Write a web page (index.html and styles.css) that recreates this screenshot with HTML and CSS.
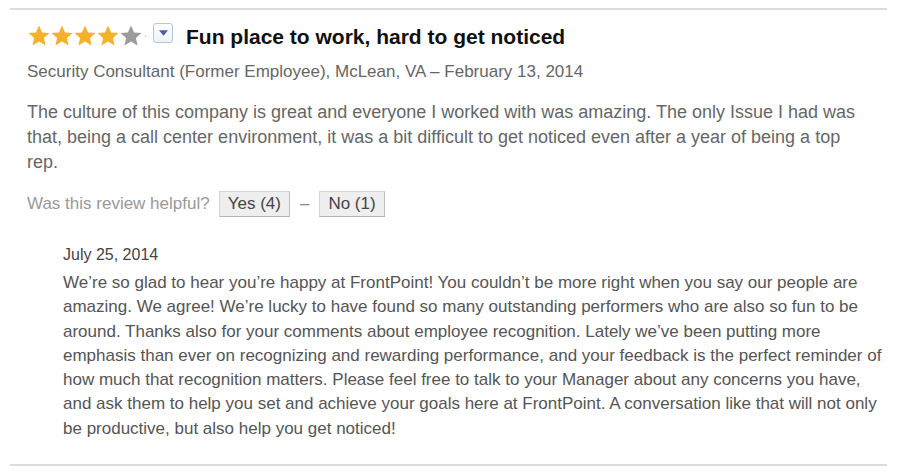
FILE: index.html
```html
<!DOCTYPE html>
<html>
<head>
<meta charset="utf-8">
<link rel="stylesheet" href="styles.css">
</head>
<body>
<div class="review">
  <div class="head">
    <div class="stars">
      <svg class="star" viewBox="0 0 24 24"><path class="on" d="M12 1.5l3.1 7 7.4.6-5.6 4.9 1.7 7.4L12 17.5l-6.6 3.9 1.7-7.4-5.6-4.9 7.4-.6z"/></svg>
      <svg class="star" viewBox="0 0 24 24"><path class="on" d="M12 1.5l3.1 7 7.4.6-5.6 4.9 1.7 7.4L12 17.5l-6.6 3.9 1.7-7.4-5.6-4.9 7.4-.6z"/></svg>
      <svg class="star" viewBox="0 0 24 24"><path class="on" d="M12 1.5l3.1 7 7.4.6-5.6 4.9 1.7 7.4L12 17.5l-6.6 3.9 1.7-7.4-5.6-4.9 7.4-.6z"/></svg>
      <svg class="star" viewBox="0 0 24 24"><path class="on" d="M12 1.5l3.1 7 7.4.6-5.6 4.9 1.7 7.4L12 17.5l-6.6 3.9 1.7-7.4-5.6-4.9 7.4-.6z"/></svg>
      <svg class="star" viewBox="0 0 24 24"><path class="off" d="M12 1.5l3.1 7 7.4.6-5.6 4.9 1.7 7.4L12 17.5l-6.6 3.9 1.7-7.4-5.6-4.9 7.4-.6z"/></svg>
      <span class="dot"></span>
    </div>
    <span class="drop"><svg viewBox="0 0 10 6" class="tri"><path d="M0 0h10L5 6z"/></svg></span>
    <h2 class="title">Fun place to work, hard to get noticed</h2>
  </div>
  <div class="meta">Security Consultant (Former Employee), McLean, VA – February 13, 2014</div>
  <p class="body">The culture of this company is great and everyone I worked with was amazing. The only Issue I had was that, being a call center environment, it was a bit difficult to get noticed even after a year of being a top rep.</p>
  <div class="helpful">
    <span class="q">Was this review helpful?</span>
    <span class="btn">Yes (4)</span>
    <span class="dash">–</span>
    <span class="btn">No (1)</span>
  </div>
  <div class="response">
    <div class="rdate">July 25, 2014</div>
    <p class="rtext">We’re so glad to hear you’re happy at FrontPoint! You couldn’t be more right when you say our people are amazing. We agree! We’re lucky to have found so many outstanding performers who are also so fun to be around. Thanks also for your comments about employee recognition. Lately we’ve been putting more emphasis than ever on recognizing and rewarding performance, and your feedback is the perfect reminder of how much that recognition matters. Please feel free to talk to your Manager about any concerns you have, and ask them to help you set and achieve your goals here at FrontPoint. A conversation like that will not only be productive, but also help you get noticed!</p>
  </div>
</div>
</body>
</html>
```
FILE: styles.css
```css
html, body {
  margin: 0;
  padding: 0;
  background: #fff;
}
body {
  font-family: "Liberation Sans", Arial, Helvetica, sans-serif;
}
.review {
  margin: 8px 0 0 10px;
  width: 860px;
  height: 454px;
  padding-left: 17px;
  border-top: 2px solid #dcdcdc;
  border-bottom: 2px solid #dcdcdc;
}
.head {
  display: flex;
  align-items: flex-start;
  height: 24px;
  margin-top: 14px;
}
.stars {
  display: flex;
  align-items: center;
  height: 24px;
}
.star {
  width: 24px;
  height: 24px;
  margin-right: -1px;
}
.star .on { fill: #f6b12c; }
.star .off { fill: #9b9b9b; }
.dot {
  width: 1px;
  height: 1px;
  background: #bbb;
  margin: 0 7px 0 3px;
}
.drop {
  width: 18px;
  height: 18px;
  border: 1px solid #b9c4dc;
  border-radius: 3px;
  background: linear-gradient(#fff, #eef1f8);
  display: flex;
  align-items: center;
  justify-content: center;
  margin-right: 13px;
  margin-top: -1px;
}
.tri {
  width: 9px;
  height: 6px;
  fill: #5157a8;
  margin-top: -1px;
}
.title {
  margin: 1px 0 0;
  font-size: 21px;
  line-height: 24px;
  font-weight: bold;
  color: #111;
}
.meta {
  font-size: 17px;
  line-height: 20px;
  color: #666;
  margin-top: 14px;
}
.body {
  margin: 18px 25px 0 0;
  font-size: 18px;
  line-height: 25px;
  color: #666;
}
.helpful {
  display: flex;
  align-items: center;
  margin-top: 16px;
  height: 26px;
}
.q {
  font-size: 17px;
  color: #999;
  margin-right: 9px;
}
.btn {
  display: inline-block;
  box-sizing: border-box;
  height: 26px;
  background: #eeeeee;
  border: 1px solid #d4d4d4;
  border-right-color: #bdbdbd;
  border-bottom-color: #b5b5b5;
  padding: 2px 8px 0;
  font-size: 17px;
  line-height: 20px;
  color: #444;
}
.dash {
  color: #888;
  font-size: 17px;
  margin: 0 10px;
}
.response {
  padding-left: 36px;
  margin-top: 28px;
}
.rdate {
  font-size: 16px;
  line-height: 20px;
  color: #444;
}
.rtext {
  margin: 6px 0 0;
  font-size: 17px;
  line-height: 24.3px;
  color: #555;
}
```
